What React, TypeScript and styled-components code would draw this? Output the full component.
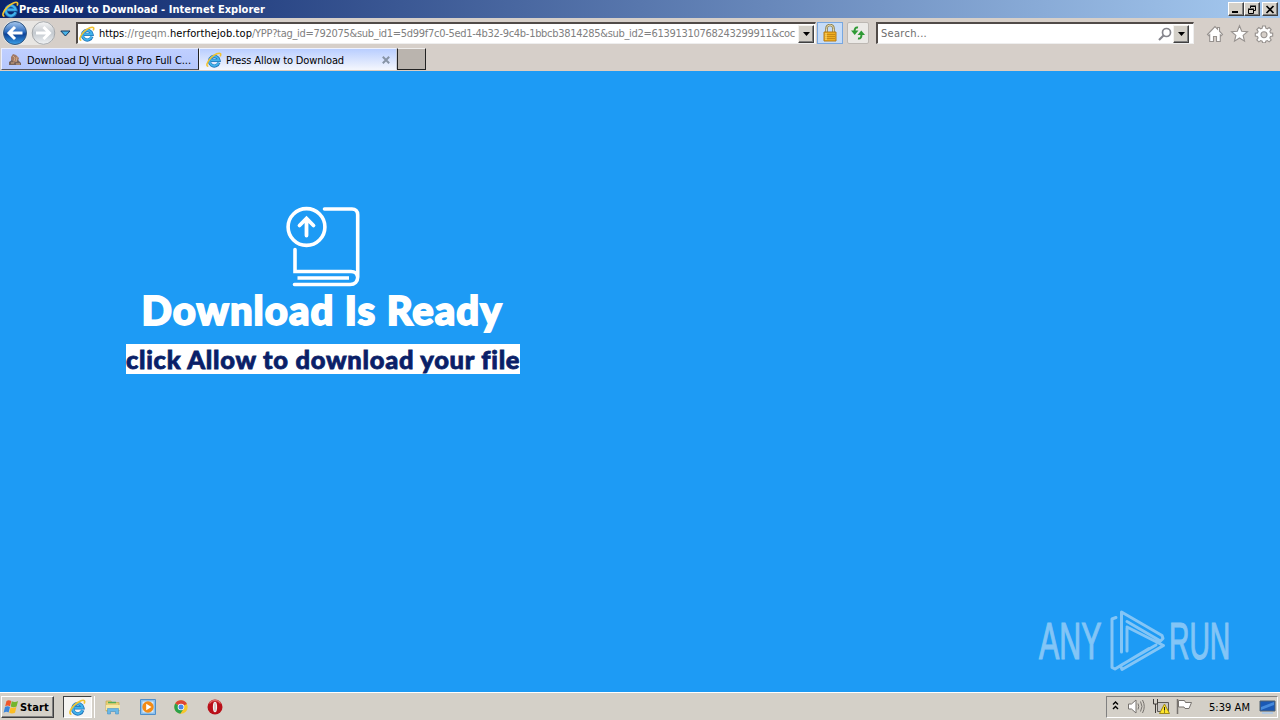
import { useLayoutEffect, useRef } from "react";
import styled, { createGlobalStyle } from "styled-components";

const GlobalStl = createGlobalStyle`
    * {
        box-sizing: border-box;
    }

    body {
        margin: 0;
        overflow: hidden;
        font-family: "DejaVu Sans Condensed", "DejaVu Sans", sans-serif;
        font-size: 11px;
        color: #000;
    }

    svg {
        display: block;
        flex: none;
    }
`;

type LabelProps = {
    children: string;
    width: number;
    bold?: boolean;
    color?: string;
}

// spreads the letters so that the label takes the given width
function Label ({children, width, bold, color}: LabelProps) {
    const ref = useRef<HTMLSpanElement>(null);

    useLayoutEffect(() => {
        const el = ref.current;
        if (!el) return;
        el.style.letterSpacing = '0px';
        const natural = el.getBoundingClientRect().width;
        el.style.letterSpacing = `${(width - natural) / children.length}px`;
    }, [children, width])

    return <LabelStl ref={ref} $bold={bold} $color={color}>{children}</LabelStl>
}

function IeIcon ({size = 16}: {size?: number}) {
    return (
        <svg width={size} height={size} viewBox="0 0 16 16" fill="none">
            <path d="M12.900 10.600A4.800 4.800 0 1 1 13 8.300H5" stroke="#2173b8" strokeWidth="3.200" />
            <path d="M12.700 10.600A4.700 4.700 0 1 1 12.900 8.300H5" stroke="#41b3ec" strokeWidth="1.900" />
            <path d="M2.300 14.300C-.3 14.300.8 10 5 5.800 8.800 2 13.400.3 14.500 1.700c.4.800.2 1.700-.3 2.600" stroke="#f2c330" strokeWidth="1.600" />
        </svg>
    )
}

function NavButtons () {
    return (
        <svg width="76" height="28" viewBox="0 0 76 28">
            <defs>
                <linearGradient id="back" x1="0" y1="0" x2="0" y2="1">
                    <stop offset="0" stopColor="#a9c9ee" />
                    <stop offset=".45" stopColor="#2c6cc0" />
                    <stop offset=".55" stopColor="#0d4197" />
                    <stop offset="1" stopColor="#3aa1ea" />
                </linearGradient>
                <linearGradient id="forward" x1="0" y1="0" x2="0" y2="1">
                    <stop offset="0" stopColor="#f6f6f6" />
                    <stop offset=".5" stopColor="#c3c9cf" />
                    <stop offset="1" stopColor="#f1f3f5" />
                </linearGradient>
            </defs>
            <path d="M15 2h28a12 12 0 0 1 0 24H15z" fill="#e8e6e3" />
            <circle cx="15" cy="14" r="12.500" fill="#f1f1f1" />
            <circle cx="15" cy="14" r="11.500" fill="url(#back)" stroke="#33577f" />
            <path d="M22.500 14H9.500M15 8l-6 6 6 6" fill="none" stroke="#fff" strokeWidth="3" />
            <circle cx="43.500" cy="14" r="11.300" fill="url(#forward)" stroke="#a5a8ab" />
            <path d="M36 14h13M43.500 8l6 6-6 6" fill="none" stroke="#fff" strokeWidth="3" />
            <path d="M60.800 12h9.200l-4.600 5z" fill="#48b4e8" stroke="#17365d" />
        </svg>
    )
}

function DropDown ({height}: {height: number}) {
    return (
        <DropStl $height={height}>
            <svg width="7" height="4" viewBox="0 0 7 4"><path d="M0 0h7L3.500 4z" /></svg>
        </DropStl>
    )
}

function LockIcon () {
    return (
        <svg width="16" height="18" viewBox="0 0 16 18">
            <path d="M4.500 8V4.500a3.500 3.500 0 0 1 7 0V8" fill="none" stroke="#8d8050" strokeWidth="2.600" />
            <path d="M4.500 8V4.500a3.500 3.500 0 0 1 7 0V8" fill="none" stroke="#e3d9ae" />
            <path d="M2 8h12v9H2z" fill="#f0ae20" stroke="#b67b12" />
            <path d="M3 10.500h10M3 12.500h10M3 14.500h10" stroke="#c88a14" />
            <path d="M4 9v7" stroke="#ffe383" />
        </svg>
    )
}

function RefreshIcon () {
    return (
        <svg width="16" height="16" viewBox="0 0 16 16" fill="none" stroke="#2f9a35" strokeWidth="2">
            <path d="M8 2.500C5.500 2 4.500 3.500 4.500 7" />
            <path d="M1 5.500h7.500L4.700 10z" fill="#2f9a35" stroke="none" />
            <path d="M8 13.500c2.500.5 3.500-1 3.500-4.500" />
            <path d="M7.500 10H15l-3.700-4.500z" fill="#2f9a35" stroke="none" />
        </svg>
    )
}

function ToolIcons () {
    return (
        <svg width="70" height="20" viewBox="0 0 70 20" fill="#fff" stroke="#96918e" strokeWidth="1.100">
            <path d="M1.500 11.500L9 3.500l2.500 2.600V4.500h2v3.700l3 3.300-1.400 1.200-.8-.8v6.600h-3.800v-5h-3v5H3.700v-6.600l-.8.800z" />
            <path d="M33.500 2.800l2.200 5.400 5.800.4-4.400 3.800 1.400 5.700-5-3.100-5 3.100 1.400-5.700-4.400-3.800 5.800-.4z" />
            <path fillRule="evenodd" d="M56.600 3h2.800l.4 2.200 1.500.6 1.900-1.300 2 2-1.300 1.900.6 1.500 2.200.4v2.800l-2.200.4-.6 1.500 1.300 1.900-2 2-1.900-1.300-1.500.6-.4 1.600h-2.800l-.4-1.600-1.500-.6-1.900 1.300-2-2 1.300-1.900-.6-1.500-2.200-.4V10.300l2.200-.4.6-1.500-1.300-1.900 2-2 1.900 1.300 1.500-.6zM58 8.700a3 3 0 1 0 0 6 3 3 0 0 0 0-6z" />
        </svg>
    )
}

function BookIcon () {
    return (
        <svg width="76" height="82" viewBox="0 0 76 82" fill="none" stroke="#fff" strokeWidth="3.600" strokeLinecap="round">
            <circle cx="21.500" cy="22" r="18.400" />
            <path d="M21.500 30.500V14M14.500 20.500l7-7 7 7" strokeWidth="3.800" />
            <path d="M39.500 4H67c3.500 0 5.700 2.200 5.700 5.700V72c0 4.500-3 7.500-7.500 7.500H9.500M10 44.500V66.500h56c3.500 0 6 2 6.500 5" />
            <path d="M12.500 73H64" strokeLinecap="butt" />
        </svg>
    )
}

function AnyRunLogo () {
    return (
        <svg width="200" height="74" viewBox="0 0 200 74">
            <g opacity=".55">
                <g fill="#d7e8f8" stroke="#d7e8f8" strokeWidth="1.200" fontFamily="'Liberation Sans', sans-serif" fontSize="51">
                    <text transform="translate(4 54) scale(.595 1)">ANY</text>
                    <text transform="translate(134 54) scale(.555 1)">RUN</text>
                </g>
                <path d="M81 12.500L77 14v48.500l3 1.500 34-20.500M86.500 47V7L127 30.500l1 3-2.500 2.500L92 16.500M92 22l36.500 18.500L87 64.500l-1.500-4L121 40M92 22v24" fill="none" stroke="#d7e8f8" strokeWidth="3" strokeLinejoin="round" strokeLinecap="round" />
            </g>
        </svg>
    )
}

function StartIcon () {
    return (
        <svg width="17" height="16" viewBox="0 0 17 16">
            <path d="M3.500 2C5.500.5 7 1.500 8.300 2L7 7.300C5.500 6.500 4 6.200 2.200 7.300z" fill="#f0562a" />
            <path d="M8.800 2.200c1.900 1.200 4.200 1 6.200-.1l-1.400 5.300c-2 1-4.200 1-5.900.1z" fill="#74b52c" />
            <path d="M2 7.900c1.900-1 3.500-.8 5 0l-1.400 5.500c-1.600-.8-3.200-.8-5 .3z" fill="#3a86dc" />
            <path d="M7.600 8.200c1.900 1 3.900.8 5.800-.1L12 13.700c-2 1.100-4.200 1-5.800.1z" fill="#fbbd24" />
        </svg>
    )
}

function FolderIcon () {
    return (
        <svg width="16" height="16" viewBox="0 0 16 16">
            <path d="M1 2h5l1 1.500h7V12H1z" fill="#e8cf76" stroke="#c5a94f" strokeWidth=".7" />
            <path d="M3 3.500h8" stroke="#54ad55" strokeWidth="1.500" />
            <path d="M1 6h14v5H1z" fill="#f7e8a4" />
            <path d="M2.500 15V9.500h11V15h-3v-2.500h-5V15z" fill="#69b8e8" stroke="#4b93c6" strokeWidth=".6" />
        </svg>
    )
}

function MediaIcon () {
    return (
        <svg width="16" height="16" viewBox="0 0 16 16">
            <path d="M.5.500h15v15H.5z" fill="#8cc0ec" stroke="#4f8fcb" />
            <path d="M2.500 2.500h11v11h-11z" fill="#dcebf8" />
            <circle cx="8" cy="8" r="5.700" fill="#f38b16" />
            <path d="M6.200 4.700L11.500 8l-5.300 3.300z" fill="#fff" />
        </svg>
    )
}

function ChromeIcon () {
    return (
        <svg width="14" height="14" viewBox="0 0 14 14">
            <circle cx="7" cy="7" r="6.700" fill="#f7c72c" />
            <path d="M7 7L1.200 3.600A6.700 6.700 0 0 1 12.900 4z" fill="#dd4436" />
            <path d="M7 7L1.200 3.600A6.700 6.700 0 0 0 6.300 13.700L9.800 8.500z" fill="#2ba14b" />
            <circle cx="7" cy="7" r="3.300" fill="#fff" />
            <circle cx="7" cy="7" r="2.500" fill="#4a86e8" />
        </svg>
    )
}

function OperaIcon () {
    return (
        <svg width="16" height="16" viewBox="0 0 16 16">
            <circle cx="8" cy="8" r="7.500" fill="#b90f18" />
            <path d="M2.500 4.500a6.500 6.500 0 0 1 11 0" fill="none" stroke="#df6a66" strokeWidth="1.200" />
            <ellipse cx="8" cy="8" rx="2.100" ry="5.300" fill="#f5f0ef" />
            <ellipse cx="8" cy="8" rx=".5" ry="4.500" fill="#b8a6a4" />
        </svg>
    )
}

function TrayIcons () {
    return (
        <svg width="84" height="18" viewBox="0 0 84 18" fill="none" stroke="#77736f">
            {/* expand chevrons */}
            <path d="M3 6.500L5.500 4 8 6.500M3 11L5.500 8.500 8 11" stroke="#000" strokeWidth="1.400" />
            {/* volume */}
            <path d="M18.500 6h3l4.500-4v13l-4.500-4h-3z" fill="#fff" />
            <path d="M28 5.500q1.500 3 0 6M30.500 3.500q3 5 0 10M32.500 2q3.500 6.500 0 13" />
            {/* network */}
            <path d="M47.500 4.500h11v9h-11z" fill="#c9c6c2" stroke="#5c5955" />
            <path d="M43.500 1v5h2v9M47.500 1v5h-2" stroke="#3e3b38" />
            <path d="M54.500 6l5 9.500h-10z" fill="#ffe52b" stroke="#9e8918" />
            <path d="M54.500 9v3.500M54.500 13.500v1" stroke="#222" />
            {/* flag */}
            <path d="M67.500 1v15" strokeWidth="1.500" />
            <path d="M68.500 2.500h6l1 2h6l-2.500 6h-4l-1-1.500h-5.500z" fill="#fff" />
        </svg>
    )
}

export default function App () {
    return (
        <ScreenStl>
            <GlobalStl />
            <TitleBarStl>
                <IeIcon size={17} />
                <Label bold color="#fff" width={246}>Press Allow to Download - Internet Explorer</Label>
                <WindowButtonsStl>
                    <WindowButtonStl>
                        <svg width="10" height="9" viewBox="0 0 10 9"><path d="M1 6h6v2H1z" /></svg>
                    </WindowButtonStl>
                    <WindowButtonStl $gap>
                        <svg width="10" height="9" viewBox="0 0 10 9" fill="none" stroke="#000">
                            <path d="M3.500 3V1.500h5v4H7M3 1h6M1.500 4.500h5v4h-5zM1 4h6" />
                        </svg>
                    </WindowButtonStl>
                    <WindowButtonStl>
                        <svg width="10" height="9" viewBox="0 0 10 9"><path d="M1.500 1l7 7M8.500 1l-7 7" stroke="#000" strokeWidth="1.700" /></svg>
                    </WindowButtonStl>
                </WindowButtonsStl>
            </TitleBarStl>

            <NavBarStl>
                <NavButtons />
                <AddressStl>
                    <IeIcon />
                    <UrlStl>
                        <Label width={25}>https</Label>
                        <Label color="#808080" width={46}>://rgeqm.</Label>
                        <Label width={82}>herforthejob.top</Label>
                        <Label color="#808080" width={543}>/YPP?tag_id=792075&sub_id1=5d99f7c0-5ed1-4b32-9c4b-1bbcb3814285&sub_id2=61391310768243299911&coc</Label>
                    </UrlStl>
                    <DropDown height={18} />
                </AddressStl>
                <AddressButtonStl $active><LockIcon /></AddressButtonStl>
                <AddressButtonStl><RefreshIcon /></AddressButtonStl>
                <SearchStl>
                    <Label color="#6d6d6d" width={46}>Search...</Label>
                    <svg width="14" height="14" viewBox="0 0 14 14" fill="none" stroke="#85858c">
                        <circle cx="8.500" cy="5.500" r="4" strokeWidth="1.700" />
                        <path d="M5.500 8.500L1 13" strokeWidth="2.200" />
                    </svg>
                    <DropDown height={18} />
                </SearchStl>
                <ToolIcons />
            </NavBarStl>

            <TabBarStl>
                <TabStl>
                    <svg width="16" height="16" viewBox="0 0 16 16">
                        <path d="M4 5l2-3 3 1 3 3-1 3 2 4H2l2-3z" fill="#a17a68" />
                        <path d="M2 10l3-2 2 3 4-3 3 3v2H2z" fill="#75635d" />
                        <path d="M6 4l2 2-1 3M10 5l-1 5M4 11h3M9 12h4" fill="none" stroke="#d6aa82" />
                    </svg>
                    <Label width={164}>Download DJ Virtual 8 Pro Full C...</Label>
                </TabStl>
                <TabStl $active>
                    <IeIcon />
                    <Label width={118}>Press Allow to Download</Label>
                    <CloseStl width="8" height="8" viewBox="0 0 8 8"><path d="M.8.800l6.400 6.400M7.200.800L.8 7.200" /></CloseStl>
                </TabStl>
                <NewTabStl />
            </TabBarStl>

            <PageStl>
                <MessageStl>
                    <BookIcon />
                    <HeadingStl><Label width={361}>Download Is Ready</Label></HeadingStl>
                    <HintStl><Label width={394}>click Allow to download your file</Label></HintStl>
                </MessageStl>
                <WatermarkStl><AnyRunLogo /></WatermarkStl>
            </PageStl>

            <TaskBarStl>
                <StartStl>
                    <StartIcon />
                    <Label bold width={29}>Start</Label>
                </StartStl>
                <RunningStl><IeIcon size={17} /></RunningStl>
                <QuickStl>
                    <FolderIcon />
                    <MediaIcon />
                    <ChromeIcon />
                    <OperaIcon />
                </QuickStl>
                <TrayStl>
                    <TrayIcons />
                    <Label width={41}>5:39 AM</Label>
                    <svg width="17" height="14" viewBox="0 0 17 14">
                        <path d="M1 1h15v10H1z" fill="#1b59b5" stroke="#51616f" />
                        <path d="M2 7l13-5v3L2 10z" fill="#478bdc" />
                        <path d="M3 13h11" stroke="#a8c8ed" strokeWidth="1.500" />
                    </svg>
                </TrayStl>
            </TaskBarStl>
        </ScreenStl>
    );
}

const LabelStl = styled.span<{$bold?: boolean; $color?: string}>`
    flex: none;
    white-space: pre;
    font-weight: ${({$bold}) => $bold ? 700 : 'inherit'};
    color: ${({$color}) => $color || 'inherit'};
`;

const ScreenStl = styled.div`
    display: flex;
    flex-direction: column;
    width: 1280px;
    height: 720px;
    overflow: hidden;
    background: #d4d0c8;
`;

const TitleBarStl = styled.div`
    display: flex;
    align-items: center;
    flex: none;
    height: 18px;
    padding: 0 2px;
    background: linear-gradient(90deg, #0a246a, #a6caf0);
`;

const WindowButtonsStl = styled.div`
    display: flex;
    margin-left: auto;
`;

const WindowButtonStl = styled.div<{$gap?: boolean}>`
    display: flex;
    align-items: center;
    justify-content: center;
    width: 16px;
    height: 14px;
    margin-right: ${({$gap}) => $gap ? '2px' : '0'};
    background: #d4d0c8;
    border: 1px solid;
    border-color: #fff #404040 #404040 #fff;
    box-shadow: inset -1px -1px #808080;
`;

const NavBarStl = styled.div`
    display: flex;
    align-items: center;
    flex: none;
    height: 30px;
    background: #d6cfc9;
`;

const AddressStl = styled.div`
    display: flex;
    align-items: center;
    width: 740px;
    height: 22px;
    padding: 0 1px 0 1px;
    background: #fff;
    border: solid;
    border-width: 2px 1px 1px 2px;
    border-color: #514b48 #eee #eee #514b48;
`;

const UrlStl = styled.div`
    display: flex;
    flex: 1;
    margin-left: 4px;
    overflow: hidden;
`;

const DropStl = styled.div<{$height: number}>`
    display: flex;
    align-items: center;
    justify-content: center;
    flex: none;
    width: 16px;
    height: ${({$height}) => $height}px;
    background: #d4d0c8;
    border: 1px solid;
    border-color: #f4f2ee #404040 #404040 #f4f2ee;
    box-shadow: inset -1px -1px #808080;
`;

const AddressButtonStl = styled.div<{$active?: boolean}>`
    display: flex;
    align-items: center;
    justify-content: center;
    flex: none;
    width: ${({$active}) => $active ? 26 : 22}px;
    height: 22px;
    margin-left: ${({$active}) => $active ? 1 : 4}px;
    background: ${({$active}) => $active ? '#c6dcf8' : '#ebe9e6'};
    border: 1px solid ${({$active}) => $active ? '#78a7e0' : '#bdb8b3'};
    border-radius: ${({$active}) => $active ? 0 : 2}px;
`;

const SearchStl = styled.div`
    display: flex;
    align-items: center;
    width: 318px;
    height: 22px;
    margin: 0 12px 0 7px;
    padding: 0 4px 0 3px;
    background: #fff;
    border: solid;
    border-width: 2px 1px 1px 2px;
    border-color: #514b48 #eee #eee #514b48;

    > svg {
        margin: 0 1px 0 auto;
    }
`;

const TabBarStl = styled.div`
    display: flex;
    flex: none;
    height: 23px;
    padding-left: 1px;
    background: #d6cfc9;
    border-bottom: 1px solid #dccdc0;
`;

const TabStl = styled.div<{$active?: boolean}>`
    display: flex;
    align-items: center;
    gap: 4px;
    width: 198px;
    height: 22px;
    padding: 2px 6px 0 ${({$active}) => $active ? 6 : 5}px;
    background: ${({$active}) => $active
        ? 'linear-gradient(#b9ceff, #f2f5fd)'
        : 'linear-gradient(#bfcfff, #b5c7fb)'};
    border: 1px solid;
    border-color: ${({$active}) => $active ? '#eef2ff #c7cbd8 #f2f5fd #eef2ff' : '#e9eeff #222 #55565e #e9eeff'};
`;

const CloseStl = styled.svg`
    margin-left: auto;
    stroke: #8794a6;
    stroke-width: 2;
`;

const NewTabStl = styled.div`
    width: 29px;
    height: 22px;
    background: #bab4ae;
    border: 1px solid;
    border-color: #efedeb #222 #222 #222;
`;

const PageStl = styled.div`
    display: flex;
    flex-direction: column;
    justify-content: space-between;
    flex: 1;
    background: #1d9bf5;
`;

const MessageStl = styled.div`
    display: flex;
    flex-direction: column;
    align-items: center;
    width: 646px;
    padding-top: 134px;
`;

const HeadingStl = styled.div`
    height: 50px;
    margin-top: -1px;
    padding-right: 2px;
    font: 900 40px/49px Lato, sans-serif;
    color: #fff;
    -webkit-text-stroke: 1.8px #fff;
`;

const HintStl = styled.div`
    width: 394px;
    height: 30px;
    margin-top: 8px;
    background: #fff;
    font: 900 25.5px/31px Lato, sans-serif;
    color: #0a1f68;
    -webkit-text-stroke: .8px #0a1f68;
`;

const WatermarkStl = styled.div`
    display: flex;
    justify-content: flex-end;
    padding: 0 45px 13px 0;
`;

const TaskBarStl = styled.div`
    display: flex;
    align-items: center;
    flex: none;
    height: 28px;
    padding: 1px 2px 0 1px;
    background: #d4d0c8;
    border-top: 1px solid #fff;
`;

const StartStl = styled.div`
    display: flex;
    align-items: center;
    width: 53px;
    height: 22px;
    padding-left: 1px;
    border: 1px solid;
    border-color: #fff #404040 #404040 #fff;
    box-shadow: inset -1px -1px #808080;
`;

const RunningStl = styled.div`
    display: flex;
    align-items: center;
    justify-content: center;
    width: 29px;
    height: 22px;
    margin-left: 9px;
    background: #f5f4f2;
    border: 1px solid;
    border-color: #404040 #fff #fff #404040;
    box-shadow: 2px 0 #d4d0c8, 3px 0 #fff;
`;

const QuickStl = styled.div`
    display: flex;
    align-items: center;
    gap: 18.500px;
    margin-left: 13px;
`;

const TrayStl = styled.div`
    display: flex;
    align-items: center;
    width: 172px;
    height: 22px;
    margin-left: auto;
    padding-left: 3px;
    border: 1px solid;
    border-color: #808080 #fff #fff #808080;

    > span {
        margin: 0 9px 0 15px;
    }
`;
